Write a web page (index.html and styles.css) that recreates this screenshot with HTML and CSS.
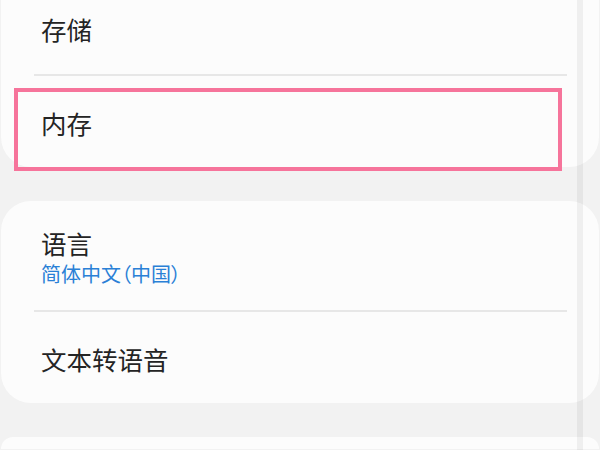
FILE: index.html
```html
<!DOCTYPE html>
<html lang="zh-CN">
<head>
    <meta charset="UTF-8">
    <meta name="viewport" content="width=device-width, initial-scale=1.0">
    <title>设置</title>
    <link rel="stylesheet" href="styles.css">
</head>
<body>

<div class="settings">
    <div class="card first">
        <div class="item">
            <div class="title">存储</div>
        </div>
        <div class="divider"></div>
        <div class="item last">
            <div class="title">内存</div>
            <!-- 标注框 -->
            <div class="highlight"></div>
        </div>
    </div>

    <div class="card">
        <div class="item two-line">
            <div class="title">语言</div>
            <div class="sub">简体中文（中国）</div>
        </div>
        <div class="divider"></div>
        <div class="item last">
            <div class="title">文本转语音</div>
        </div>
    </div>

    <div class="card peek"></div>
</div>

<div class="scroll-track"></div>

</body>
</html>
```

FILE: styles.css
```css
html, body {
    margin: 0;
    height: 100%;
}
body {
    font-family: "Noto Sans CJK SC", "Noto Sans", sans-serif;
    background-color: #f2f2f2;
    color: #242424;
    overflow: hidden;
}
.settings {
    padding: 0 1px;
}
.card {
    background-color: #fcfcfc;
    border-radius: 30px;
    margin-bottom: 34px;
}
.card.first {
    margin-top: -13px;
    border-radius: 0 0 30px 30px;
}
.card.peek {
    height: 12px;
    margin-bottom: 0;
    border-radius: 30px 30px 0 0;
}
.item {
    position: relative;
    padding: 27px 40px 30px;
}
.item.last {
    padding: 32px 40px 29px;
}
.item.two-line {
    padding: 27px 40px 24px;
}
.title {
    font-size: 25.5px;
    line-height: 30px;
}
.sub {
    margin-top: 4px;
    font-size: 20px;
    line-height: 24px;
    color: #2a80d6;
    font-feature-settings: "palt";
}
.divider {
    height: 2px;
    margin: 0 32px 0 33px;
    background-color: #e7e7e7;
}
.highlight {
    position: absolute;
    left: 13px;
    top: 12px;
    width: 540px;
    height: 75px;
    border: 4px solid #f6749b;
}
.scroll-track {
    position: absolute;
    top: 0;
    bottom: 0;
    left: 577px;
    width: 6px;
    background-color: rgba(0, 0, 0, 0.05);
}
```
